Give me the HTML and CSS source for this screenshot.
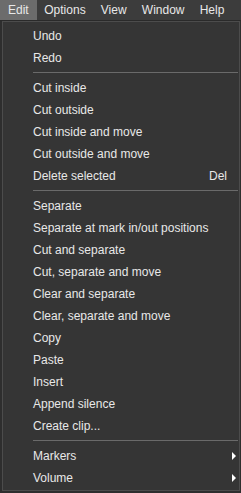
FILE: index.html
```html
<!DOCTYPE html>
<html lang="en">
  <head>
    <meta charset="UTF-8" />
    <meta name="viewport" content="width=device-width, initial-scale=1.0" />
    <link rel="stylesheet" href="styles.css">
    <title>Edit menu</title>
  </head>
  <body>
    <div class="menubar">
      <div class="top-item open">Edit</div>
      <div class="top-item">Options</div>
      <div class="top-item">View</div>
      <div class="top-item">Window</div>
      <div class="top-item">Help</div>
    </div>

    <div class="menu">
      <div class="item">Undo</div>
      <div class="item">Redo</div>
      <div class="sep"></div>
      <div class="item">Cut inside</div>
      <div class="item">Cut outside</div>
      <div class="item">Cut inside and move</div>
      <div class="item">Cut outside and move</div>
      <div class="item">Delete selected <span class="key">Del</span></div>
      <div class="sep"></div>
      <div class="item">Separate</div>
      <div class="item">Separate at mark in/out positions</div>
      <div class="item">Cut and separate</div>
      <div class="item">Cut, separate and move</div>
      <div class="item">Clear and separate</div>
      <div class="item">Clear, separate and move</div>
      <div class="item">Copy</div>
      <div class="item">Paste</div>
      <div class="item">Insert</div>
      <div class="item">Append silence</div>
      <div class="item">Create clip...</div>
      <div class="sep"></div>
      <div class="item sub">Markers <span class="arrow"></span></div>
      <div class="item sub">Volume <span class="arrow"></span></div>
    </div>
  </body>
</html>
```

FILE: styles.css
```css
body {
  margin: 0;
  background: #2e2e2e;
  color: #e8e8e8;
  font-family: "Liberation Sans", "Noto Sans", sans-serif;
  font-size: 12px;
}
.menubar {
  display: flex;
  height: 21px;
  background: #3c3c3c;
  border-bottom: 1px solid #2a2a2a;
  box-sizing: border-box;
}
.top-item {
  height: 20px;
  line-height: 21px;
  padding: 0 7.6px;
}
.top-item.open {
  background: #6c6c6c;
  padding: 0 8px;
}
.menu {
  margin-left: 2px;
  width: 238px;
  box-sizing: border-box;
  background: #353535;
  border: 1px solid #4c4c4c;
  padding: 2px 0;
}
.item {
  display: flex;
  align-items: center;
  justify-content: space-between;
  height: 22px;
  box-sizing: border-box;
  padding: 1px 12px 0 30px;
}
.sub {
  padding-right: 3px;
}
.arrow {
  width: 0;
  height: 0;
  border-top: 4px solid transparent;
  border-bottom: 4px solid transparent;
  border-left: 4px solid #ffffff;
}
.sep {
  height: 8px;
  display: flex;
  align-items: center;
  margin-left: 30px;
  margin-right: 1px;
}
.sep::after {
  content: "";
  flex: 1;
  height: 1px;
  background: #6a6a6a;
}
```
